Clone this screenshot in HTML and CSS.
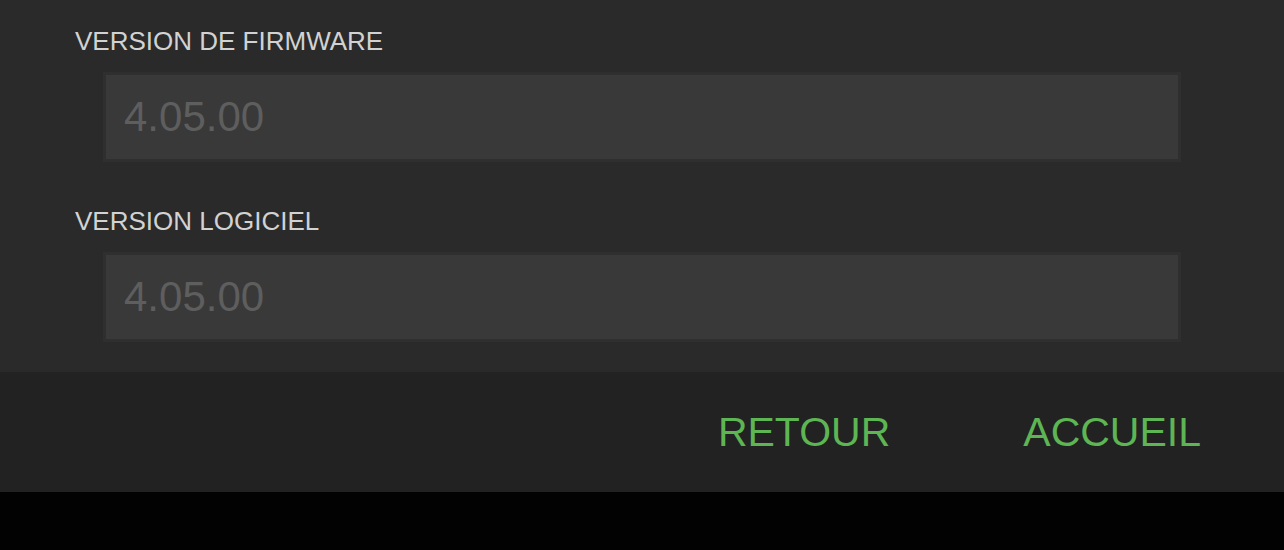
FILE: index.html
```html
<!DOCTYPE html>
<html lang="fr">
  <head>
    <meta charset="UTF-8" />
    <meta name="viewport" content="width=device-width, initial-scale=1.0" />
    <title>Versions</title>
    <link rel="stylesheet" href="styles.css">
  </head>
  <body>
    <div class="info">
      <div class="field">
        <label for="firmware">VERSION DE FIRMWARE</label>
        <input type="text" id="firmware" value="4.05.00" readonly />
      </div>
      <div class="field">
        <label for="software">VERSION LOGICIEL</label>
        <input type="text" id="software" value="4.05.00" readonly />
      </div>
    </div>

    <div class="footer">
      <button>RETOUR</button>
      <button>ACCUEIL</button>
    </div>
  </body>
</html>
```

FILE: styles.css
```css
body {
  font-family: "Liberation Sans", Arial, sans-serif;
  margin: 0;
  background: #020203;
  height: 550px;
  overflow: hidden;
}
.info {
  background: #2a2a2a;
  padding: 26px 0 30px 0;
  display: flex;
  flex-direction: column;
  gap: 44px;
}
.field {
  display: flex;
  flex-direction: column;
  gap: 16px;
}
label {
  padding-left: 75px;
  font-size: 26px;
  line-height: 30px;
  color: #d2d2d2;
}
input[type='text'] {
  box-sizing: border-box;
  margin-left: 103px;
  width: 1078px;
  height: 90px;
  padding: 0 18px;
  border: 3px solid #2f2f2f;
  background: #393939;
  color: #5e5e5e;
  font-family: "Liberation Sans", Arial, sans-serif;
  font-size: 42px;
  outline: none;
}
.footer {
  background: #222222;
  height: 120px;
  display: flex;
  justify-content: flex-end;
  align-items: center;
  gap: 133px;
  padding-right: 83px;
}
button {
  background: none;
  border: none;
  padding: 0;
  font-family: "Liberation Sans", Arial, sans-serif;
  font-size: 41px;
  color: #5db553;
  cursor: pointer;
}
```
